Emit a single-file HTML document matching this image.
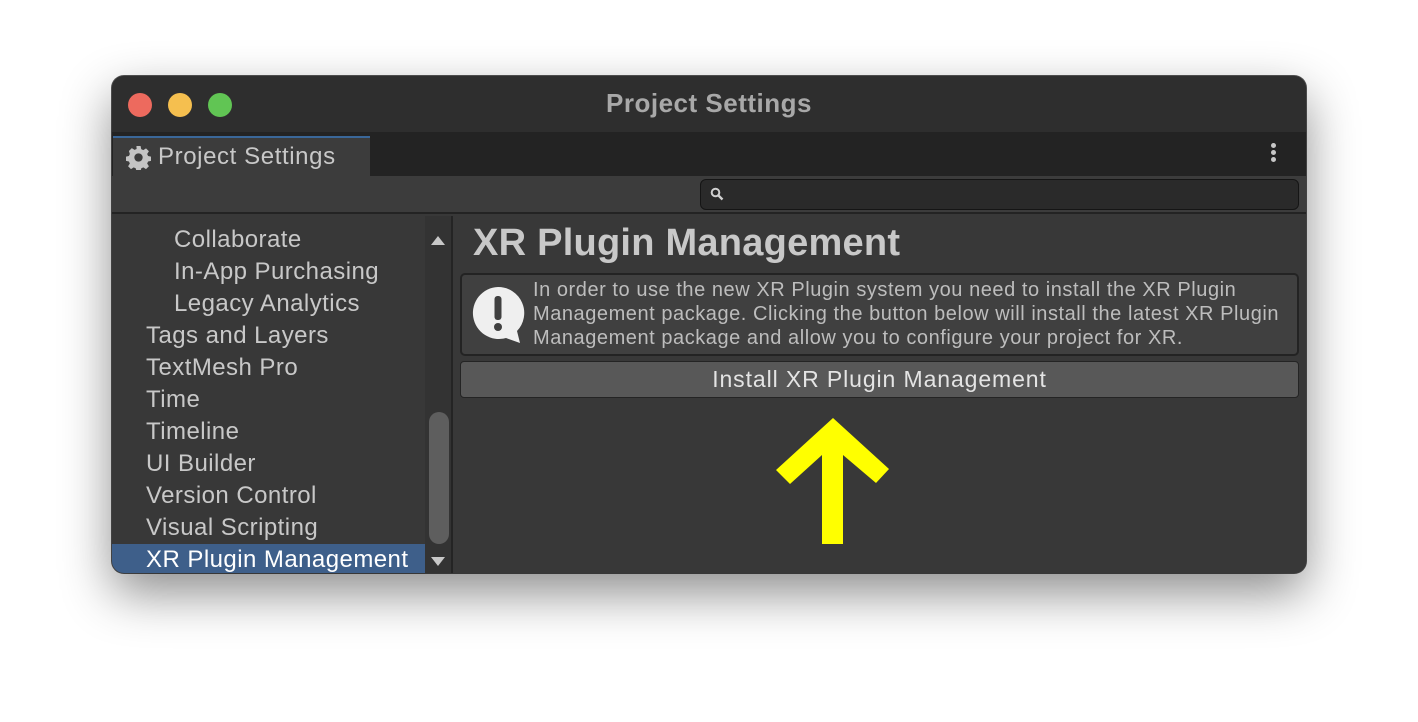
<!DOCTYPE html>
<html><head><style>
*{margin:0;padding:0;box-sizing:border-box}
body{width:1418px;height:722px;background:#fff;position:relative;overflow:hidden;font-family:"Liberation Sans",sans-serif}
.win{position:absolute;left:112px;top:76px;width:1194px;height:497px;border-radius:12px;background:#383838;overflow:hidden;box-shadow:0 20px 50px rgba(0,0,0,.45),0 0 0 1px #555}
.title{position:absolute;left:0;top:0;width:100%;height:56px;background:#2e2e2e;color:#a8a8a8;font-weight:bold;font-size:26px;letter-spacing:.5px;text-align:center;line-height:54px}
.dot{position:absolute;top:17px;width:24px;height:24px;border-radius:50%}
.tabbar{position:absolute;left:0;top:56px;width:100%;height:44px;background:#232323}
.tab{position:absolute;left:1px;top:4px;width:257px;height:40px;background:#3c3c3c;border-top:2px solid #3a6799;color:#c8c8c8;font-size:24px;letter-spacing:.6px;line-height:38px;padding-left:45px}
.tool{position:absolute;left:0;top:100px;width:100%;height:38px;background:#3c3c3c;border-bottom:2px solid #232323}
.search{position:absolute;left:588px;top:3px;width:599px;height:31px;background:#2a2a2a;border:1px solid #151515;border-radius:6px}
.left{position:absolute;left:0;top:140px;width:313px;height:357px;background:#383838}
.item{position:absolute;color:#c8c8c8;font-size:24px;letter-spacing:.45px;height:32px;line-height:34px;white-space:nowrap}
.sb{position:absolute;left:313px;top:140px;width:26px;height:357px;background:#333}
.sep{position:absolute;left:339px;top:140px;width:2px;height:357px;background:#242424}
.right{position:absolute;left:341px;top:140px;right:0;height:357px;background:#383838}
</style></head><body>
<div class="win">
<div class="title">Project Settings</div>
<div class="dot" style="left:16px;background:#ed6a5e"></div>
<div class="dot" style="left:56px;background:#f5bf4f"></div>
<div class="dot" style="left:96px;background:#61c554"></div>
<div class="tabbar">
<div class="tab">Project Settings
<svg style="position:absolute;left:13px;top:7px" width="25" height="25" viewBox="0 0 24 24"><path fill="#c4c4c4" d="M10 1h4l.6 3 2 .9 2.6-1.7 2.8 2.8-1.7 2.6.9 2 3 .6v4l-3 .6-.9 2 1.7 2.6-2.8 2.8-2.6-1.7-2 .9-.6 3h-4l-.6-3-2-.9-2.6 1.7-2.8-2.8 1.7-2.6-.9-2-3-.6v-4l3-.6.9-2L2.8 5.8 5.6 3l2.6 1.7 2-.9zM12 8a4 4 0 100 8 4 4 0 000-8z"/></svg></div>
<div style="position:absolute;left:1159px;top:11px;width:5px;height:5px;border-radius:50%;background:#c8c8c8;box-shadow:0 7px 0 #c8c8c8,0 14px 0 #c8c8c8"></div>
</div>
<div class="tool"><div class="search"><svg style="position:absolute;left:9px;top:7px" width="14" height="14" viewBox="0 0 14 14"><circle cx="5.5" cy="5.5" r="3.8" fill="none" stroke="#d0d0d0" stroke-width="2"/><path d="M8.3 8.3L12.5 12.5" stroke="#d0d0d0" stroke-width="2.4"/></svg></div></div>
<div class="left">
<div class="item" style="left:62px;top:7px">Collaborate</div>
<div class="item" style="left:62px;top:39px">In-App Purchasing</div>
<div class="item" style="left:62px;top:71px">Legacy Analytics</div>
<div class="item" style="left:34px;top:103px">Tags and Layers</div>
<div class="item" style="left:34px;top:135px">TextMesh Pro</div>
<div class="item" style="left:34px;top:167px">Time</div>
<div class="item" style="left:34px;top:199px">Timeline</div>
<div class="item" style="left:34px;top:231px">UI Builder</div>
<div class="item" style="left:34px;top:263px">Version Control</div>
<div class="item" style="left:34px;top:295px">Visual Scripting</div>
<div style="position:absolute;left:0;top:328px;width:313px;height:29px;background:#3e5f8a"></div>
<div class="item" style="left:34px;top:327px;color:#fff">XR Plugin Management</div>
</div>
<div class="sb">
<div style="position:absolute;left:6px;top:20px;border:7px solid transparent;border-bottom:9px solid #c8c8c8;border-top:0"></div>
<div style="position:absolute;left:4px;top:196px;width:20px;height:132px;border-radius:10px;background:#5e5e5e"></div>
<div style="position:absolute;left:6px;top:341px;border:7px solid transparent;border-top:9px solid #c8c8c8;border-bottom:0"></div>
</div>
<div class="sep"></div>
<div class="right">
<div style="position:absolute;left:20px;top:6px;font-size:38px;letter-spacing:.25px;font-weight:bold;color:#c8c8c8;white-space:nowrap">XR Plugin Management</div>
<div style="position:absolute;left:7px;top:57px;width:839px;height:83px;background:#404040;border:2px solid #232323;border-radius:5px">
<svg style="position:absolute;left:9px;top:11px" width="54" height="58" viewBox="0 0 54 58"><path fill="#efefef" d="M27 1a26 26 0 1 0 8 51l14 5-3-12A26 26 0 0 0 27 1z"/><rect x="23.5" y="10" width="7" height="24" rx="3" fill="#404040"/><circle cx="27" cy="41" r="4" fill="#404040"/></svg>
<div style="position:absolute;left:71px;top:3px;font-size:20px;letter-spacing:.55px;line-height:24px;color:#bdbdbd;white-space:nowrap">In order to use the new XR Plugin system you need to install the XR Plugin<br>Management package. Clicking the button below will install the latest XR Plugin<br>Management package and allow you to configure your project for XR.</div>
</div>
<div style="position:absolute;left:7px;top:145px;width:839px;height:37px;background:#585858;border:1px solid #242424;border-radius:4px;color:#e4e4e4;font-size:23px;letter-spacing:.9px;text-align:center;line-height:34px">Install XR Plugin Management</div>
<svg style="position:absolute;left:0;top:0" width="853" height="357"><polygon fill="#ffff00" points="380,202 436,253 423,267 390,239 390,328 369,328 369,239 337,268 323,254"/></svg>
</div>
</div>
</body></html>
